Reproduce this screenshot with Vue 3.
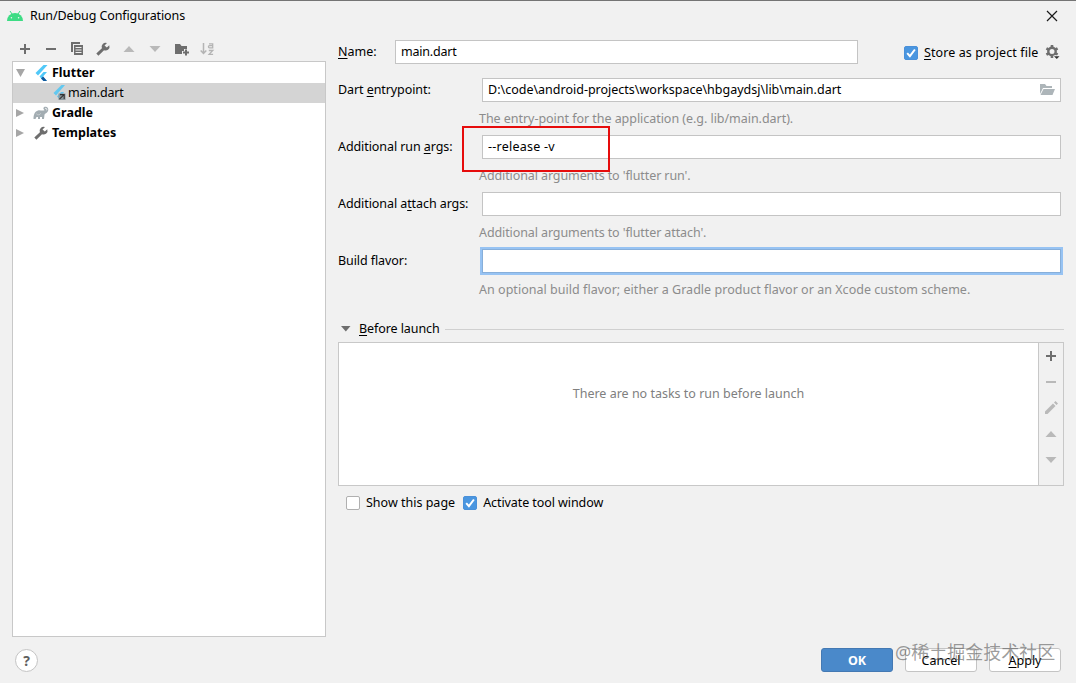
<script setup>
import { ref } from 'vue';

const name = ref("main.dart");
const storeAsFile = ref(true);
const showPage = ref(false);
const activateWindow = ref(true);

const fields = ref([
  { id: "entry", before: "Dart ", key: "e", after: "ntrypoint:", value: "D:\\code\\android-projects\\workspace\\hbgaydsj\\lib\\main.dart", hint: "The entry-point for the application (e.g. lib/main.dart).", browse: true },
  { id: "run", before: "Additional run ", key: "a", after: "rgs:", value: "--release -v", hint: "Additional arguments to 'flutter run'.", marked: true },
  { id: "attach", before: "Additional a", key: "t", after: "tach args:", value: "", hint: "Additional arguments to 'flutter attach'." },
  { id: "flavor", before: "Build flavor:", key: "", after: "", value: "", hint: "An optional build flavor; either a Gradle product flavor or an Xcode custom scheme.", focused: true },
]);
</script>


<template>
  <main class="dialog">
    <header class="titlebar">
      <svg class="android" width="16" height="12" viewBox="0 0 16 12">
        <path d="M3 1l2 3M13 1l-2 3" stroke="#3ddc84" stroke-width="1" />
        <path d="M0 11a8 8 0 0 1 16 0z" fill="#3ddc84" />
        <circle cx="4.4" cy="7.8" r=".8" fill="#f1f1f1" />
        <circle cx="11.6" cy="7.8" r=".8" fill="#f1f1f1" />
      </svg>
      <h1 class="title">Run/Debug Configurations</h1>
      <svg class="close" width="12" height="12" viewBox="0 0 12 12">
        <path d="M1 1l10 10M11 1L1 11" stroke="#1a1a1a" stroke-width="1.2" />
      </svg>
    </header>

    <div class="content">
      <!-- Configurations -->
      <aside class="sidebar">
        <div class="toolbar">
          <svg width="16" height="16" viewBox="0 0 16 16"><path d="M8 3v10M3 8h10" stroke="#6e6e6e" stroke-width="2" /></svg>
          <svg width="16" height="16" viewBox="0 0 16 16"><path d="M3 8h10" stroke="#6e6e6e" stroke-width="2" /></svg>
          <svg width="16" height="16" viewBox="0 0 16 16">
            <path d="M2 1h9v2H4v8H2z" fill="#6e6e6e" />
            <path d="M5 4h9v10H5zM6.5 6v1h6V6zM6.5 8.500v1h6v-1zM6.500 11v1h6v-1z" fill="#6e6e6e" fill-rule="evenodd" />
          </svg>
          <svg width="16" height="16" viewBox="0 0 16 16"><path d="M14.300 4.200l-2.500 2.400-2.300-2.200L12 2a4 4 0 0 0-5.100 5.200L1.300 12.600l2.100 2.100L9 9.200a4 4 0 0 0 5.300-5z" fill="#6e6e6e" /></svg>
          <svg width="16" height="16" viewBox="0 0 16 16"><path d="M2.500 11L8 5l5.500 6z" fill="#b9b9b9" /></svg>
          <svg width="16" height="16" viewBox="0 0 16 16"><path d="M2.500 5h11L8 11z" fill="#b9b9b9" /></svg>
          <svg width="16" height="16" viewBox="0 0 16 16">
            <path d="M2 3h5l1.500 2H14v3h-3v2H9v3H2z" fill="#6e6e6e" />
            <path d="M13 8.500v6M10 11.500h6" stroke="#6e6e6e" stroke-width="2" />
          </svg>
          <svg width="16" height="16" viewBox="0 0 16 16" fill="none" stroke="#b4b4b4" stroke-width="1.500">
            <path d="M4.500 2v10M1.700 9.500l2.800 3 2.800-3" />
            <path d="M10 2.800h3.700v4.100h-3.200a1.100 1.100 0 0 1 0-2.200h3" stroke-width="1.300" />
            <path d="M9.800 9.500h4l-3.700 3.900h4" stroke-width="1.300" />
          </svg>
        </div>
        <ul class="tree">
          <li class="node">
            <svg class="twisty" width="9" height="16" viewBox="0 0 9 16"><path d="M0 4h9l-4.500 8z" fill="#a6a6a6" /></svg>
            <svg class="node-icon" width="16" height="16" viewBox="0 0 16 16">
              <path d="M10.500 0L2.500 8 5 10.500 14.500 0z" fill="#50c8f8" />
              <path d="M10.500 7L6.500 11.500l4 4.500H14l-4-4.500L14 7z" fill="#50c8f8" />
              <path d="M8 13.500l2.200-2L14 16h-3.500z" fill="#10579b" />
            </svg>
            <b>Flutter</b>
          </li>
          <li class="node child selected">
            <svg class="node-icon" width="16" height="16" viewBox="0 0 16 16">
              <path d="M9.500 0L1.500 8 4 10.500 13 0z" fill="#62c8f0" />
              <path d="M9 7L5 11.500 7.500 14 12 7z" fill="#62c4ef" />
              <path d="M6.500 8.500h7V15h-7z" fill="#8b979d" />
              <path d="M7.500 14.200l4.300-4.300M8 9.600h4.200V14" fill="none" stroke="#333" stroke-width="1.100" />
            </svg>
            <span>main.dart</span>
          </li>
          <li class="node">
            <svg class="twisty" width="9" height="16" viewBox="0 0 9 16"><path d="M0 4v8l8-4z" fill="#a6a6a6" /></svg>
            <svg class="node-icon" width="16" height="16" viewBox="0 0 16 16">
              <path d="M.500 14C.500 9 2 6.500 5 5.500c2-.800 4 .800 6.500-.300L10.600 4c-.8-1.200.6-2.500 2.200-2.200 2.700.4 3.300 3.800 1.400 5.500-1 1-2.400 1.200-2.700 2.400L11 14H9v-2H7v2H5v-2H3.500l-1 2z" fill="#a3adb2" />
              <path d="M12 3.600c1.200-.8 2.300.4 1.500 1.700" fill="none" stroke="#fff" stroke-width=".8" />
              <path d="M3.300 8.700c1.500 1.800 3.800 1.300 4.400-.5" fill="none" stroke="#d8dcde" stroke-width=".6" />
            </svg>
            <b>Gradle</b>
          </li>
          <li class="node">
            <svg class="twisty" width="9" height="16" viewBox="0 0 9 16"><path d="M0 4v8l8-4z" fill="#a6a6a6" /></svg>
            <svg class="node-icon" width="16" height="16" viewBox="0 0 16 16"><path d="M14.300 4.200l-2.500 2.400-2.300-2.200L12 2a4 4 0 0 0-5.100 5.200L1.300 12.600l2.100 2.100L9 9.200a4 4 0 0 0 5.300-5z" fill="#6e6e6e" /></svg>
            <b>Templates</b>
          </li>
        </ul>
      </aside>

      <!-- Selected configuration -->
      <section class="editor">
        <div class="name-row">
          <label class="name-label" for="name"><u>N</u>ame:</label>
          <input id="name" type="text" class="input name-input" v-model="name">
          <label class="check store">
            <input type="checkbox" class="checkbox" v-model="storeAsFile">
            <svg class="tick" width="14" height="14" viewBox="0 0 14 14"><path d="M3.200 7.200l2.700 3 5-6.700" /></svg>
            <span><u>S</u>tore as project file</span>
          </label>
          <svg class="gear" width="16" height="16" viewBox="0 0 16 16">
            <circle cx="7" cy="7.500" r="3.700" fill="none" stroke="#6e6e6e" stroke-width="2.400" />
            <path d="M7 1v2.500M7 11.500V14M1.400 4.300l2.100 1.200M10.500 9.500l2.100 1.200M1.400 10.700l2.100-1.200M10.500 5.500l2.100-1.200" stroke="#6e6e6e" stroke-width="2.600" />
            <path d="M8.500 11.500h6.500v3H9z" fill="#f1f1f1" />
            <path d="M9 12.200h5.500l-2.700 2.800z" fill="#333" />
          </svg>
        </div>

        <div v-for="field in fields" :key="field.id" class="field">
          <label class="field-label" :for="field.id">{{ field.before }}<u>{{ field.key }}</u>{{ field.after }}</label>
          <div class="field-body">
            <div class="input-wrap">
              <input :id="field.id" type="text" class="input" :class="{ focused: field.focused, marked: field.marked }" v-model="field.value">
              <svg v-if="field.browse" class="folder" width="16" height="14" viewBox="0 0 16 14">
                <path d="M1 1h5l1.500 2H13v2H4L1 11z" fill="#adb5b9" />
                <path d="M4.500 6H16l-2.500 6H1.500z" fill="#adb5b9" />
              </svg>
              <span v-if="field.marked" class="marker"></span>
            </div>
            <p class="hint" :class="'hint-' + field.id">{{ field.hint }}</p>
          </div>
        </div>

        <div class="section-title">
          <svg width="10" height="6" viewBox="0 0 10 6"><path d="M0 0h9.500L4.800 5.500z" fill="#6e6e6e" /></svg>
          <span><u>B</u>efore launch</span>
        </div>
        <div class="tasks">
          <p class="empty">There are no tasks to run before launch</p>
          <div class="task-tools">
            <svg width="16" height="16" viewBox="0 0 16 16"><path d="M8 3v10M3 8h10" stroke="#6e6e6e" stroke-width="2" /></svg>
            <svg width="16" height="16" viewBox="0 0 16 16"><path d="M3 8h10" stroke="#b9b9b9" stroke-width="2" /></svg>
            <svg width="16" height="16" viewBox="0 0 16 16"><path d="M10 3.500L2 11.500V14h2.500l8-8zM11 2.500L12.500 1 15 3.500 13.500 5z" fill="#b9b9b9" /></svg>
            <svg width="16" height="16" viewBox="0 0 16 16"><path d="M2.500 11L8 5l5.500 6z" fill="#b9b9b9" /></svg>
            <svg width="16" height="16" viewBox="0 0 16 16"><path d="M2.500 5h11L8 11z" fill="#b9b9b9" /></svg>
          </div>
        </div>
        <div class="options">
          <label class="check show-page">
            <input type="checkbox" class="checkbox" v-model="showPage">
            <span>Show this page</span>
          </label>
          <label class="check activate">
            <input type="checkbox" class="checkbox" v-model="activateWindow">
            <svg class="tick" width="14" height="14" viewBox="0 0 14 14"><path d="M3.200 7.200l2.700 3 5-6.700" /></svg>
            <span>Activate tool window</span>
          </label>
        </div>
      </section>
    </div>

    <footer class="footer">
      <button class="help">?</button>
      <button class="button primary">OK</button>
      <button class="button">Cancel</button>
      <button class="button"><u>A</u>pply</button>
      <span class="watermark">@稀土掘金技术社区</span>
    </footer>
  </main>
</template>

<style>
body {
  background-color: #f1f1f1;
}
</style>

<style scoped>
* {
  box-sizing: border-box;
}

.dialog {
  display: flex;
  flex-direction: column;
  width: 1076px;
  height: 683px;
  border-top: 1px solid #747474;
  background-color: #f1f1f1;
  color: #000000;
  font-family: "Noto Sans", "Noto Sans CJK SC", sans-serif;
  font-size: 12.5px;
  line-height: 20px;
  white-space: nowrap;
  overflow: hidden;
}

svg {
  display: block;
  flex: none;
}

u {
  text-underline-offset: 2px;
  text-decoration-thickness: 1px;
  text-decoration-skip-ink: none;
}

.titlebar {
  display: flex;
  align-items: center;
  height: 31px;
  padding: 0 18px 2px 7px;
}

.title {
  margin: 0 auto 0 7px;
  font-size: 12.5px;
  font-weight: 400;
  letter-spacing: -0.1px;
}

.content {
  display: flex;
  gap: 12px;
  height: 605px;
  padding: 0 12px;
}

.sidebar {
  display: flex;
  flex-direction: column;
  width: 314px;
}

.toolbar {
  display: flex;
  align-items: center;
  gap: 10px;
  height: 29px;
  padding: 4px 0 0 5px;
}

.tree {
  flex: 1;
  margin: 0;
  padding: 1px 0 0;
  list-style: none;
  border: 1px solid #c8c8c8;
  background-color: #ffffff;
}

.node {
  display: flex;
  align-items: center;
  height: 20px;
  padding-left: 3px;
}

.node-icon {
  margin: 0 3px 0 8px;
}

.child {
  padding-left: 31px;
  letter-spacing: -0.2px;
}

.child .node-icon {
  margin-right: 0;
}

.selected {
  background-color: #d4d4d4;
}

.editor {
  flex: 1;
  min-width: 0;
  padding-top: 8px;
}

.name-row {
  display: flex;
  align-items: center;
  height: 24px;
  margin-bottom: 14px;
}

.name-label {
  width: 57px;
}

.input {
  display: block;
  width: 100%;
  height: 24px;
  padding: 0 5px 1px;
  border: 1px solid #c4c4c4;
  border-radius: 0;
  outline: none;
  background-color: #ffffff;
  color: #000000;
  font: inherit;
}

.name-input {
  width: 463px;
  letter-spacing: -0.2px;
}

.focused {
  border-color: #87afda;
  box-shadow: 0 0 0 2px #97c3f3;
}

.marked {
  letter-spacing: 0.25px;
}

.check {
  display: flex;
  align-items: center;
  position: relative;
}

.store {
  margin-left: 46px;
  padding-top: 1px;
  letter-spacing: 0.1px;
}

.activate {
  letter-spacing: -0.08px;
}

.checkbox {
  appearance: none;
  width: 14px;
  height: 14px;
  margin: 0 6px 0 0;
  border: 1px solid #b0b0b0;
  border-radius: 2px;
  background-color: #ffffff;
}

.checkbox:checked {
  border-color: #4a90d9;
  background-color: #4a96e0;
}

.tick {
  position: absolute;
  left: 0;
  fill: none;
  stroke: #ffffff;
  stroke-width: 2;
}

.gear {
  margin-left: 6px;
}

.field {
  display: flex;
  height: 57px;
}

.field-label {
  width: 141px;
  line-height: 23px;
  letter-spacing: -0.08px;
}

.field-body {
  flex: 1;
}

.input-wrap {
  position: relative;
  margin: 0 3px;
}

.folder {
  position: absolute;
  top: 5px;
  right: 6px;
}

.marker {
  position: absolute;
  top: -9px;
  left: -20px;
  width: 148px;
  height: 46px;
  border: 2px solid #e60c0c;
}

.hint {
  margin: 0;
  color: #8c8c8c;
  line-height: 33px;
}

.hint-entry {
  letter-spacing: -0.04px;
}

.hint-run,
.hint-attach {
  letter-spacing: -0.1px;
}

.hint-flavor {
  letter-spacing: 0.03px;
}

.section-title {
  display: flex;
  align-items: center;
  gap: 8px;
  height: 27px;
  margin-top: 9px;
  padding-left: 3px;
  letter-spacing: -0.08px;
}

.section-title::after {
  content: "";
  flex: 1;
  height: 1px;
  margin-top: 1px;
  margin-left: -3px;
  background-color: #d0d0d0;
}

.tasks {
  display: flex;
  height: 144px;
  border: 1px solid #c8c8c8;
  background-color: #ffffff;
}

.empty {
  flex: 1;
  margin: 0;
  padding-top: 41px;
  text-align: center;
  color: #808080;
}

.task-tools {
  display: flex;
  flex-direction: column;
  align-items: center;
  gap: 10px;
  width: 25px;
  padding-top: 5px;
  border-left: 1px solid #c8c8c8;
  background-color: #f1f1f1;
}

.options {
  display: flex;
  align-items: center;
  gap: 8px;
  height: 33px;
  padding-left: 8px;
}

.footer {
  display: flex;
  align-items: center;
  gap: 12px;
  position: relative;
  height: 46px;
  padding: 0 15px;
}

.help {
  width: 23px;
  height: 23px;
  margin-right: auto;
  padding: 0;
  border: 1px solid #c4c4c4;
  border-radius: 50%;
  background-color: #ffffff;
  color: #606060;
  font: 700 14px "Noto Sans", sans-serif;
}

.button {
  width: 72px;
  height: 24px;
  padding: 2px 0 0;
  border: 1px solid #c4c4c4;
  border-radius: 3px;
  background-color: #ffffff;
  color: #000000;
  font: inherit;
}

.primary {
  border-color: #4479b3;
  background-color: #4a89ca;
  color: #ffffff;
  font-weight: 700;
}

.watermark {
  position: absolute;
  top: 1px;
  left: 895px;
  color: rgba(90, 90, 90, 0.6);
  font-size: 18px;
  line-height: 28px;
}
</style>
